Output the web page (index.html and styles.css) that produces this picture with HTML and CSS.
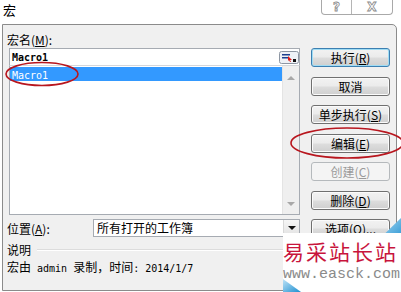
FILE: index.html
```html
<!DOCTYPE html>
<html lang="zh-CN">
<head>
    <meta charset="UTF-8">
    <title>宏</title>
    <link rel="stylesheet" href="styles.css">
</head>
<body>
    <div class="titleBar">
        <span class="titleText">宏</span>
        <div class="captionBtns">
            <span class="capBtn helpBtn">?</span>
            <span class="capBtn closeBtn">X</span>
        </div>
    </div>

    <div class="dialog">
        <div class="mainCol">
            <p class="fieldLabel">宏名(<u>M</u>):</p>
            <div class="nameBox">
                <span class="mono boldish">Macro1</span>
                <span class="pickBtn">
                    <svg width="20" height="13" viewBox="0 0 20 13">
                        <rect x="0.5" y="0.5" width="19" height="12" rx="2" fill="#eef1f6" stroke="#8d96a3"/>
                        <rect x="3" y="3" width="8" height="1.5" fill="#1b3f8f"/>
                        <rect x="3" y="6" width="6" height="1.5" fill="#1b3f8f"/>
                        <path d="M9 5 L13 9 L11 9 L12 11 L11 11 L10 9 L9 10 Z" fill="#e01818"/>
                        <rect x="14" y="8" width="3" height="3" fill="#111"/>
                    </svg>
                </span>
            </div>
            <div class="macroList">
                <div class="listItems">
                    <div class="listRow selected"><span class="mono">Macro1</span></div>
                </div>
                <div class="scrollBar">
                    <span class="arrowUp"></span>
                    <span class="arrowDown"></span>
                </div>
            </div>
            <div class="locRow">
                <span class="locLabel">位置(<u>A</u>):</span>
                <div class="locSelect">
                    <span class="locText">所有打开的工作簿</span>
                    <span class="dropBtn"><span class="dropArrow"></span></span>
                </div>
            </div>
            <div class="descHead">
                <span>说明</span>
                <span class="descLine"></span>
            </div>
            <p class="descText">宏由<span class="mono keepSpace"> admin </span>录制，时间<span class="mono keepSpace">: 2014/1/7</span></p>
        </div>

        <div class="btnCol">
            <div class="winBtn defaultBtn">执行(<u>R</u>)</div>
            <div class="winBtn">取消</div>
            <div class="winBtn">单步执行(<u>S</u>)</div>
            <div class="winBtn">编辑(<u>E</u>)</div>
            <div class="winBtn disabledBtn">创建(<u>C</u>)</div>
            <div class="winBtn">删除(<u>D</u>)</div>
            <div class="winBtn">选项(<u>O</u>)...</div>
        </div>
    </div>

    <!-- red marks drawn over the dialog -->
    <svg class="marks" width="401" height="292" viewBox="0 0 401 292">
        <ellipse cx="42" cy="74" rx="36" ry="11.5" fill="none" stroke="#b8161e" stroke-width="1.6"/>
        <ellipse cx="347" cy="143" rx="56" ry="15" fill="none" stroke="#b8161e" stroke-width="1.6"/>
    </svg>

    <div class="watermark">
        <svg class="wmShapes" width="118" height="77" viewBox="0 0 118 77">
            <defs>
                <linearGradient id="wmBlue" x1="0" y1="0" x2="1" y2="1">
                    <stop offset="0" stop-color="#bfe3f7"/>
                    <stop offset="1" stop-color="#1d8fd0"/>
                </linearGradient>
            </defs>
            <polygon points="90,30 118,3 118,30" fill="url(#wmBlue)"/>
            <rect x="0" y="18" width="118" height="59" fill="#fff"/>
            <polygon points="0,77 0,64 18,77" fill="url(#wmBlue)"/>
        </svg>
        <p class="wmTitle">易采站长站</p>
        <p class="wmUrl">www.easck.com</p>
    </div>
</body>
</html>
```

FILE: styles.css
```css
body {
    margin: 0;
    width: 401px;
    height: 292px;
    overflow: hidden;
    position: relative;
    background-color: #fff;
    font-family: "Noto Sans CJK SC", sans-serif;
    font-size: 12px;
    color: #000;
}

p {
    margin: 0;
}

u {
    text-decoration: underline;
    text-underline-offset: 1px;
}

.mono {
    font-family: "DejaVu Sans Mono", monospace;
    font-size: 10px;
}

.keepSpace {
    white-space: pre;
}

.boldish {
    font-weight: bold;
}

/* title bar */

.titleBar {
    height: 24px;
    display: flex;
    justify-content: space-between;
    align-items: flex-start;
}

.titleText {
    padding: 2px 0 0 3px;
    font-size: 13px;
    line-height: 16px;
}

.captionBtns {
    display: flex;
    margin-right: 8px;
    height: 14px;
    border: 1px solid #a9a9a9;
    border-top: none;
    border-radius: 0 0 4px 4px;
    background-color: #fff;
}

.capBtn {
    display: flex;
    justify-content: center;
    align-items: center;
    font-family: "DejaVu Sans", sans-serif;
    font-weight: bold;
    font-size: 12px;
    line-height: 14px;
    color: #fff;
    -webkit-text-stroke: 0.8px #8a8a8a;
}

.helpBtn {
    width: 29px;
    border-right: 1px solid #b5b5b5;
}

.closeBtn {
    width: 40px;
}

/* dialog body */

.dialog {
    margin-left: 2px;
    width: 395px;
    height: 267px;
    box-sizing: border-box;
    border: 1px solid #8b8b8b;
    border-radius: 0 5px 0 0;
    background-color: #f0f0f0;
    display: flex;
}

.mainCol {
    width: 291px;
    padding: 7px 0 0 6px;
    display: flex;
    flex-direction: column;
}

.fieldLabel {
    margin-left: -2px;
    line-height: 16px;
    height: 16px;
}

.nameBox {
    height: 18px;
    box-sizing: border-box;
    border: 1px solid #a6abb2;
    background-color: #fff;
    display: flex;
    justify-content: space-between;
    align-items: center;
    padding: 0 0 0 2px;
}

.pickBtn {
    display: flex;
}

.macroList {
    margin-top: -1px;
    height: 150px;
    box-sizing: border-box;
    border: 1px solid #a6abb2;
    border-top-color: #d4d7db;
    background-color: #fff;
    display: flex;
}

.listItems {
    flex: 1;
    padding-top: 1px;
}

.listRow {
    height: 14px;
    line-height: 14px;
    padding-left: 2px;
}

.selected {
    background-color: #3399ff;
    color: #fff;
}

.scrollBar {
    width: 17px;
    background-color: #efefef;
    border-left: 1px solid #e4e4e4;
    display: flex;
    flex-direction: column;
    justify-content: space-between;
    align-items: center;
    padding: 10px 0 8px;
    box-sizing: border-box;
}

.arrowUp {
    width: 0;
    height: 0;
    border-left: 4px solid transparent;
    border-right: 4px solid transparent;
    border-bottom: 4px solid #a8a8a8;
}

.arrowDown {
    width: 0;
    height: 0;
    border-left: 4px solid transparent;
    border-right: 4px solid transparent;
    border-top: 4px solid #a8a8a8;
}

.locRow {
    margin-top: 4px;
    display: flex;
    align-items: center;
    height: 18px;
}

.locLabel {
    margin-left: -2px;
    width: 86px;
}

.locSelect {
    flex: 1;
    height: 18px;
    box-sizing: border-box;
    border: 1px solid #a6abb2;
    background-color: #fff;
    display: flex;
    justify-content: space-between;
    align-items: center;
}

.locText {
    padding-left: 3px;
    line-height: 16px;
}

.dropBtn {
    width: 16px;
    height: 16px;
    box-sizing: border-box;
    border-left: 1px solid #d8d8d8;
    background: linear-gradient(#f6f6f6, #e2e2e2);
    display: flex;
    justify-content: center;
    align-items: center;
}

.dropArrow {
    width: 0;
    height: 0;
    border-left: 4px solid transparent;
    border-right: 4px solid transparent;
    border-top: 4px solid #111;
}

.descHead {
    margin: 6px 0 0 -2px;
    display: flex;
    align-items: center;
    line-height: 14px;
}

.descLine {
    flex: 1;
    height: 1px;
    margin: 0 -8px 0 6px;
    background-color: #dcdcdc;
    border-bottom: 1px solid #fff;
}

.descText {
    margin: 3px 0 0 -2px;
    line-height: 14px;
}

/* command buttons */

.btnCol {
    margin-left: 11px;
    padding-top: 23px;
    width: 79px;
    display: flex;
    flex-direction: column;
    gap: 9.5px;
}

.winBtn {
    height: 19px;
    box-sizing: border-box;
    border: 1px solid #707070;
    border-radius: 3px;
    background: linear-gradient(#f2f2f2 0%, #ebebeb 48%, #dddddd 52%, #cfcfcf 100%);
    box-shadow: inset 0 0 0 1px #fbfbfb;
    text-align: center;
    line-height: 17px;
    white-space: nowrap;
}

.defaultBtn {
    border-color: #3c7fb1;
    box-shadow: inset 0 0 0 1px #9fdcf4;
}

.disabledBtn {
    border-color: #b5b9bc;
    background: #f4f4f4;
    box-shadow: none;
    color: #9a9a9a;
}

/* overlays */

.marks {
    position: absolute;
    left: 0;
    top: 0;
    pointer-events: none;
}

.watermark {
    position: absolute;
    left: 283px;
    top: 215px;
    width: 118px;
    height: 77px;
}

.wmShapes {
    position: absolute;
    left: 0;
    top: 0;
}

.wmTitle {
    position: relative;
    margin-top: 23px;
    font-family: "Noto Sans CJK SC", serif;
    font-size: 21px;
    line-height: 26px;
    letter-spacing: 2px;
    color: #c8143c;
    white-space: nowrap;
}

.wmUrl {
    position: relative;
    margin-top: 3px;
    font-family: "Liberation Mono", monospace;
    font-size: 15px;
    line-height: 16px;
    color: #8a8a8a;
    white-space: nowrap;
}
```
